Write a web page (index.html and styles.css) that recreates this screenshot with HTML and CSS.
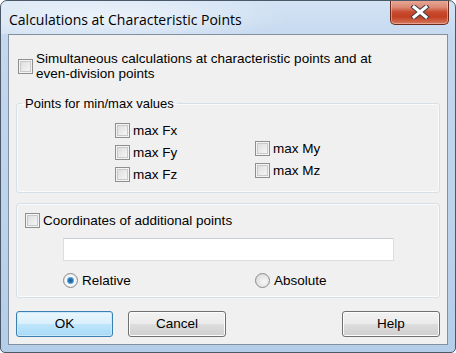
FILE: index.html
```html
<!DOCTYPE html>
<html lang="en">
<head>
    <meta charset="UTF-8">
    <title>Calculations at Characteristic Points</title>
    <link rel="stylesheet" href="styles.css">
</head>
<body>
    <div class="window">
        <div class="titlebar">
            <span class="title">Calculations at Characteristic Points</span>
            <div class="close-button">
                <svg width="20" height="14" viewBox="0 0 20 14">
                    <path d="M4 2 L16 12 M16 2 L4 12" stroke="#3d3d4a" stroke-width="5" stroke-linecap="square"/>
                    <path d="M4 2 L16 12 M16 2 L4 12" stroke="#ffffff" stroke-width="3" stroke-linecap="square"/>
                </svg>
            </div>
        </div>
        <div class="client">
            <div class="check-row top-option">
                <span class="checkbox"></span>
                <span class="label">Simultaneous calculations at characteristic points and at<br>even-division points</span>
            </div>

            <fieldset class="group minmax">
                <legend>Points for min/max values</legend>
                <div class="columns">
                    <div class="col col-f">
                        <div class="check-row"><span class="checkbox"></span><span class="label">max Fx</span></div>
                        <div class="check-row"><span class="checkbox"></span><span class="label">max Fy</span></div>
                        <div class="check-row"><span class="checkbox"></span><span class="label">max Fz</span></div>
                    </div>
                    <div class="col col-m">
                        <div class="check-row"><span class="checkbox"></span><span class="label">max My</span></div>
                        <div class="check-row"><span class="checkbox"></span><span class="label">max Mz</span></div>
                    </div>
                </div>
            </fieldset>

            <div class="group coords">
                <div class="check-row"><span class="checkbox"></span><span class="label">Coordinates of additional points</span></div>
                <div class="text-field"></div>
                <div class="radios">
                    <div class="radio-row relative"><span class="radio checked"></span><span class="label">Relative</span></div>
                    <div class="radio-row"><span class="radio"></span><span class="label">Absolute</span></div>
                </div>
            </div>

            <div class="buttons">
                <div class="btn default">OK</div>
                <div class="btn cancel">Cancel</div>
                <div class="btn help">Help</div>
            </div>
        </div>
    </div>
</body>
</html>
```

FILE: styles.css
```css
body {
    margin: 0;
    padding: 0;
    width: 456px;
    height: 353px;
    overflow: hidden;
    font-family: "Liberation Sans", Arial, sans-serif;
    font-size: 13.5px;
    color: #000;
}
.window {
    width: 456px;
    height: 353px;
    box-sizing: border-box;
    border: 1px solid #4a5868;
    border-radius: 7px 7px 5px 5px;
    background: linear-gradient(180deg, #d3e3f4 0%, #c3d7ee 12%, #bcd3ec 60%, #b4cde9 100%);
    display: flex;
    flex-direction: column;
    overflow: hidden;
}
.titlebar {
    height: 33px;
    display: flex;
    align-items: flex-start;
    background: radial-gradient(ellipse 180px 26px at 110px 16px, rgba(255, 255, 255, 0.55), rgba(255, 255, 255, 0) 100%),
                linear-gradient(90deg, rgba(255, 255, 255, 0.2), rgba(255, 255, 255, 0) 60%);
}
.title {
    font-family: "Open Sans", "Noto Sans", sans-serif;
    font-size: 14px;
    margin: 9px 0 0 8px;
    line-height: 20px;
    color: #000;
}
.close-button {
    margin-left: auto;
    margin-right: 6px;
    margin-top: -1px;
    width: 59px;
    height: 25px;
    box-sizing: border-box;
    border: 1px solid #6b2a1e;
    border-top: none;
    border-radius: 0 0 5px 5px;
    background: linear-gradient(180deg, #e9a99a 0%, #dc8a74 30%, #c84a2e 50%, #c33f22 70%, #d6765c 100%);
    box-shadow: inset 0 0 0 1px rgba(255, 220, 210, 0.45);
    display: flex;
    align-items: center;
    justify-content: center;
}
.client {
    margin: 0 7px;
    height: 311px;
    box-sizing: border-box;
    border: 1px solid #83909f;
    background: #f0f0f0;
    padding: 0 7px;
}
.check-row {
    display: flex;
    align-items: center;
    height: 15px;
    line-height: 15px;
}
.checkbox {
    width: 15px;
    height: 15px;
    box-sizing: border-box;
    border: 1px solid #8e8f8f;
    background: linear-gradient(135deg, #d9d9d9 0%, #ededed 60%, #fafafa 100%);
    box-shadow: inset 0 0 0 1px #f4f4f4, inset 0 0 0 2px #c9c9c9;
    margin-right: 3px;
    flex-shrink: 0;
}
.top-option {
    height: 30px;
    margin-top: 16px;
    margin-left: 2px;
}
.group {
    border: 1px solid #d5dfe5;
    border-radius: 3px;
    box-shadow: inset 0 0 0 1px #fbfbfb;
}
fieldset.minmax {
    margin: 15px 0 0;
    padding: 12px 0 10px 0;
    height: 97px;
    box-sizing: border-box;
}
.minmax legend {
    margin-left: 5px;
    padding: 0 3px;
    line-height: 15px;
    font-size: 13px;
}
.columns {
    display: flex;
    padding-left: 98px;
}
.col {
    display: flex;
    flex-direction: column;
    gap: 7px;
}
.col-f {
    width: 140px;
}
.col-m {
    margin-top: 18px;
}
.coords {
    margin-top: 10px;
    padding: 9px 0 0 8px;
    height: 95px;
    box-sizing: border-box;
}
.text-field {
    margin: 10px 0 0 38px;
    width: 331px;
    height: 23px;
    box-sizing: border-box;
    border: 1px solid #d9dfe3;
    border-top-color: #c9cfd4;
    background: #fff;
}
.radios {
    display: flex;
    margin: 12px 0 0 38px;
}
.radio-row {
    display: flex;
    align-items: center;
    height: 15px;
    line-height: 15px;
}
.relative {
    width: 192px;
}
.radio {
    width: 15px;
    height: 15px;
    box-sizing: border-box;
    border-radius: 50%;
    border: 1px solid #8b8b8b;
    background: radial-gradient(circle at 60% 60%, #f8f8f8 0%, #dedede 70%, #cfcfcf 100%);
    margin-right: 4px;
    flex-shrink: 0;
}
.radio.checked {
    background: radial-gradient(circle at 50% 50%, #1c5a8e 0%, #2b7fc2 26%, #8fc4ea 38%, #ffffff 44%, #dfdfdf 80%, #cfcfcf 100%);
}
.buttons {
    display: flex;
    margin-top: 13px;
}
.btn {
    height: 26px;
    line-height: 24px;
    box-sizing: border-box;
    text-align: center;
    border: 1px solid #707070;
    border-radius: 3px;
    background: linear-gradient(180deg, #f2f2f2 0%, #ebebeb 48%, #dddddd 52%, #cfcfcf 100%);
    box-shadow: inset 0 0 0 1px #fcfcfc;
    width: 98px;
}
.btn.default {
    width: 97px;
    border-color: #3c7fb1;
    background: linear-gradient(180deg, #eaf6fd 0%, #d9f0fc 48%, #bee6fd 52%, #a7d9f5 100%);
    box-shadow: inset 0 0 0 1px #c8eafc;
}
.btn.cancel {
    margin-left: 15px;
}
.btn.help {
    margin-left: auto;
}
```
